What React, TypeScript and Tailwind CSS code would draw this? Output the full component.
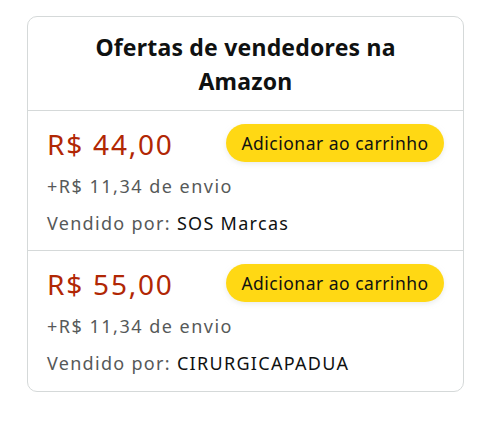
import React from "react";

const offers = [
  { price: "R$ 44,00", ship: "+R$ 11,34 de envio", seller: "SOS Marcas" },
  { price: "R$ 55,00", ship: "+R$ 11,34 de envio", seller: "CIRURGICAPADUA" },
];

export default function App() {
  return (
    <div
      className="w-[500px] h-[425px] bg-white pt-[16px] pl-[27px]"
      style={{ fontFamily: '"Noto Sans", "Open Sans", Arial, sans-serif' }}
    >
      <div className="w-[437px] border border-[#d5d9d9] rounded-[10px] text-[#0f1111]">
        <div className="pt-[13px] pb-[12px] text-center text-[23px] tracking-[0.2px] font-bold leading-[34px] border-b border-[#d5d9d9]">
          Ofertas de vendedores na
          <br />
          Amazon
        </div>
        {offers.map((o, i) => (
          <div
            key={i}
            className={
              "px-[19px] pt-[12px] " +
              (i === 0 ? "pb-[15px] border-b border-[#d5d9d9]" : "pb-[16px]")
            }
          >
            <div className="flex items-center justify-between h-[40px]">
              <span className="text-[28px] tracking-[1.8px] leading-[40px] text-[#b12704] mt-[2px]">
                {o.price}
              </span>
              <button className="h-[38px] w-[218px] rounded-full bg-[#ffd814] text-[17.5px] tracking-[0.5px] text-[#0f1111] shadow-[0_2px_5px_0_rgba(213,217,217,0.5)]">
                Adicionar ao carrinho
              </button>
            </div>
            <div className="mt-[11px] text-[18px] tracking-[1.5px] leading-[24px] text-[#565959]">{o.ship}</div>
            <div className="mt-[13px] text-[18px] tracking-[1.3px] leading-[24px] text-[#565959]">
              Vendido por: <span className="text-[#0f1111]">{o.seller}</span>
            </div>
          </div>
        ))}
      </div>
    </div>
  );
}
